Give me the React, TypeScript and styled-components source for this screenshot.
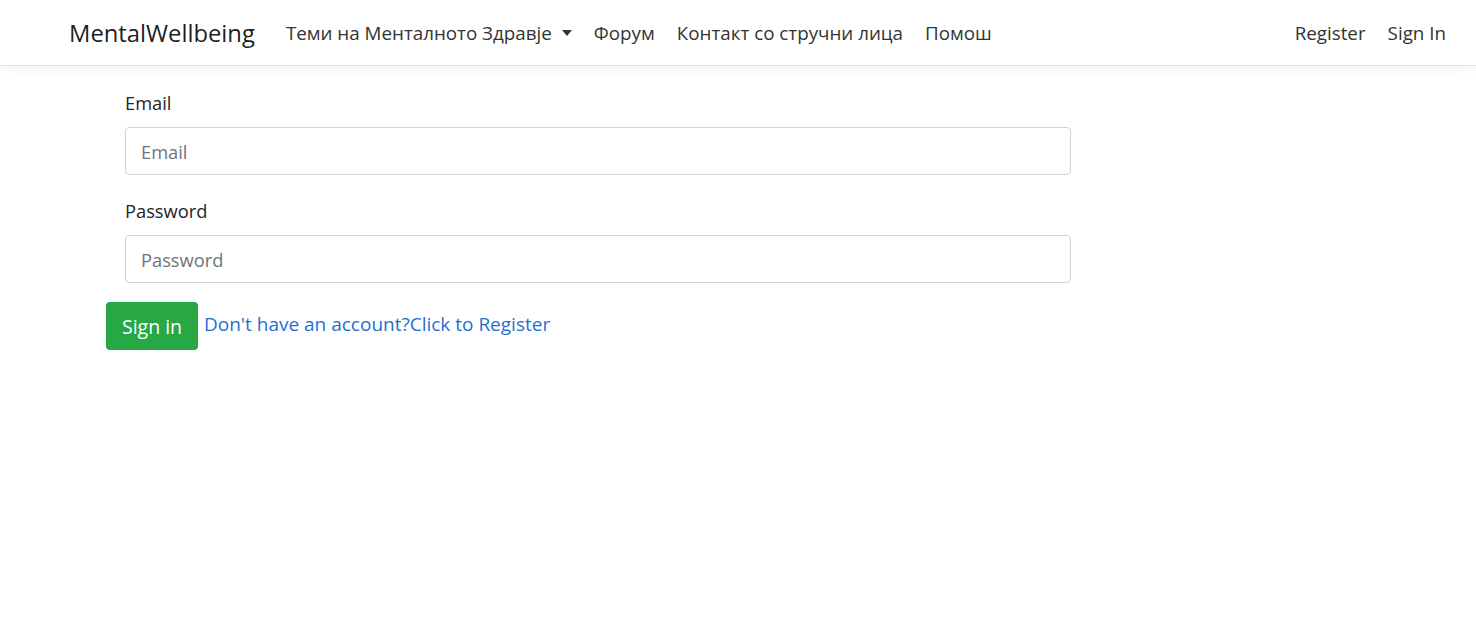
import React from 'react';
import styled, { createGlobalStyle } from 'styled-components';

const GlobalStyle = createGlobalStyle`
  body {
    margin: 0;
    background: #fff;
    font-family: "Open Sans", "Noto Sans", Arial, sans-serif;
    color: #212529;
  }
`;

const Navbar = styled.header`
  height: 66px;
  display: flex;
  align-items: center;
  padding: 0 22px 0 69px;
  border-bottom: 1px solid #e2e2e2;
  box-shadow: 0 4px 14px rgba(0, 0, 0, 0.045);
  box-sizing: border-box;
`;

const Brand = styled.a`
  font-size: 23.8px;
  color: rgba(0, 0, 0, 0.9);
  text-decoration: none;
  margin-right: 23px;
`;

const NavList = styled.nav<{ right?: boolean }>`
  display: flex;
  align-items: center;
  gap: 6px;
  margin-left: ${({ right }) => (right ? 'auto' : '0')};
`;

const NavLink = styled.a`
  font-size: 18.8px;
  color: #333;
  text-decoration: none;
  padding: 0 8px;
  display: flex;
  align-items: center;
`;

const Caret = styled.span`
  display: inline-block;
  margin-left: 10px;
  border-top: 6px solid #333;
  border-left: 5.5px solid transparent;
  border-right: 5.5px solid transparent;
`;

const Main = styled.main`
  padding: 25px 0 0 106px;
  width: 965px;
`;

const FormGroup = styled.div`
  padding-left: 19px;
  margin-bottom: 24px;
`;

const Label = styled.label`
  display: block;
  font-size: 18.3px;
  line-height: 24px;
  margin-bottom: 12px;
`;

const Input = styled.input`
  display: block;
  box-sizing: border-box;
  width: 946px;
  height: 48px;
  padding: 0 15px;
  font-family: inherit;
  font-size: 18.3px;
  color: #495057;
  border: 1px solid #ced4da;
  border-radius: 4px;
  outline: none;
  &::placeholder {
    color: #6c757d;
  }
`;

const Actions = styled.div`
  display: flex;
  align-items: flex-start;
  gap: 6px;
  margin-top: -5px;
`;

const Button = styled.button`
  width: 92px;
  height: 48px;
  padding: 0;
  font-family: inherit;
  font-size: 19.5px;
  color: #fff;
  background: #28a745;
  border: none;
  border-radius: 4px;
`;

const RegisterLink = styled.a`
  font-size: 19px;
  line-height: 24px;
  color: #1f6fd1;
  text-decoration: none;
  margin-top: 10px;
`;

export default function App() {
  return (
    <>
      <GlobalStyle />
      <Navbar>
        <Brand href="#">MentalWellbeing</Brand>
        <NavList>
          <NavLink href="#">
            Теми на Менталното Здравје
            <Caret />
          </NavLink>
          <NavLink href="#">Форум</NavLink>
          <NavLink href="#">Контакт со стручни лица</NavLink>
          <NavLink href="#">Помош</NavLink>
        </NavList>
        <NavList right>
          <NavLink href="#">Register</NavLink>
          <NavLink href="#">Sign In</NavLink>
        </NavList>
      </Navbar>
      <Main>
        <FormGroup>
          <Label htmlFor="email">Email</Label>
          <Input id="email" type="email" placeholder="Email" />
        </FormGroup>
        <FormGroup>
          <Label htmlFor="password">Password</Label>
          <Input id="password" type="password" placeholder="Password" />
        </FormGroup>
        <Actions>
          <Button>Sign in</Button>
          <RegisterLink href="#">Don't have an account?Click to Register</RegisterLink>
        </Actions>
      </Main>
    </>
  );
}
